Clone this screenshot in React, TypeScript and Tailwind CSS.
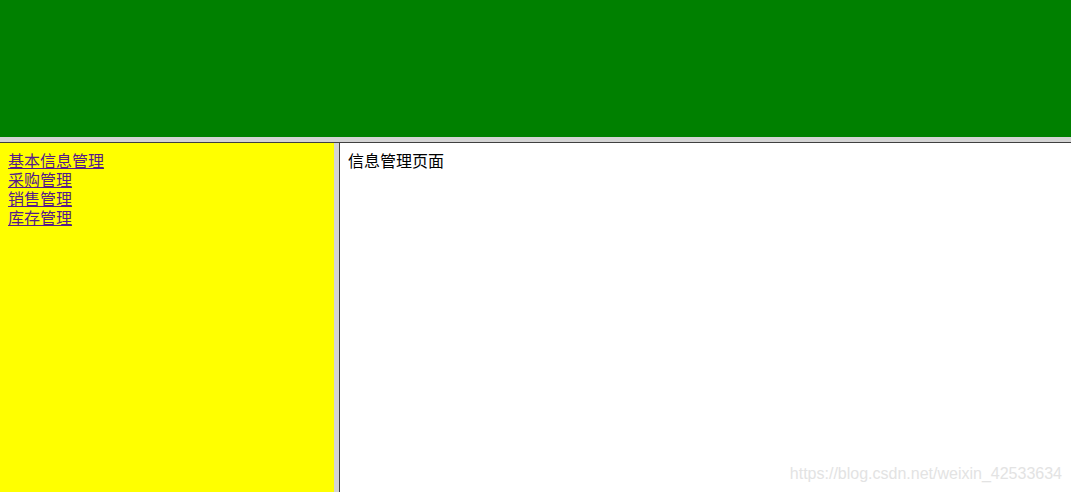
const links = ["基本信息管理", "采购管理", "销售管理", "库存管理"];

export default function App() {
  return (
    <div
      className="relative flex h-[492px] w-[1071px] flex-col overflow-hidden bg-white text-[16px] leading-[19px]"
      style={{ fontFamily: '"SimSun", "Noto Sans CJK SC", sans-serif' }}
    >
      {/* top frame */}
      <div className="h-[137px] shrink-0 bg-[#008000]" />
      {/* horizontal frame border */}
      <div className="h-[6px] shrink-0 border-b border-[#404040] bg-[#d4d4d4]" />

      <div className="flex min-h-0 flex-1">
        {/* left frame */}
        <div className="flex w-[334px] shrink-0 flex-col bg-[#ffff00] p-2">
          {links.map((l) => (
            <a key={l} href="#" className="w-fit text-[#551a8b] underline">
              {l}
            </a>
          ))}
        </div>
        {/* vertical frame border */}
        <div className="w-[6px] shrink-0 border-r border-[#404040] bg-[#d4d4d4]" />
        {/* main frame */}
        <div className="flex-1 bg-white p-2 text-black">信息管理页面</div>
      </div>

      <div
        className="absolute bottom-[9px] right-[9px] text-[16px] text-[#e3e3e3]"
        style={{ fontFamily: '"Liberation Sans", Arial, sans-serif' }}
      >
        https://blog.csdn.net/weixin_42533634
      </div>
    </div>
  );
}
